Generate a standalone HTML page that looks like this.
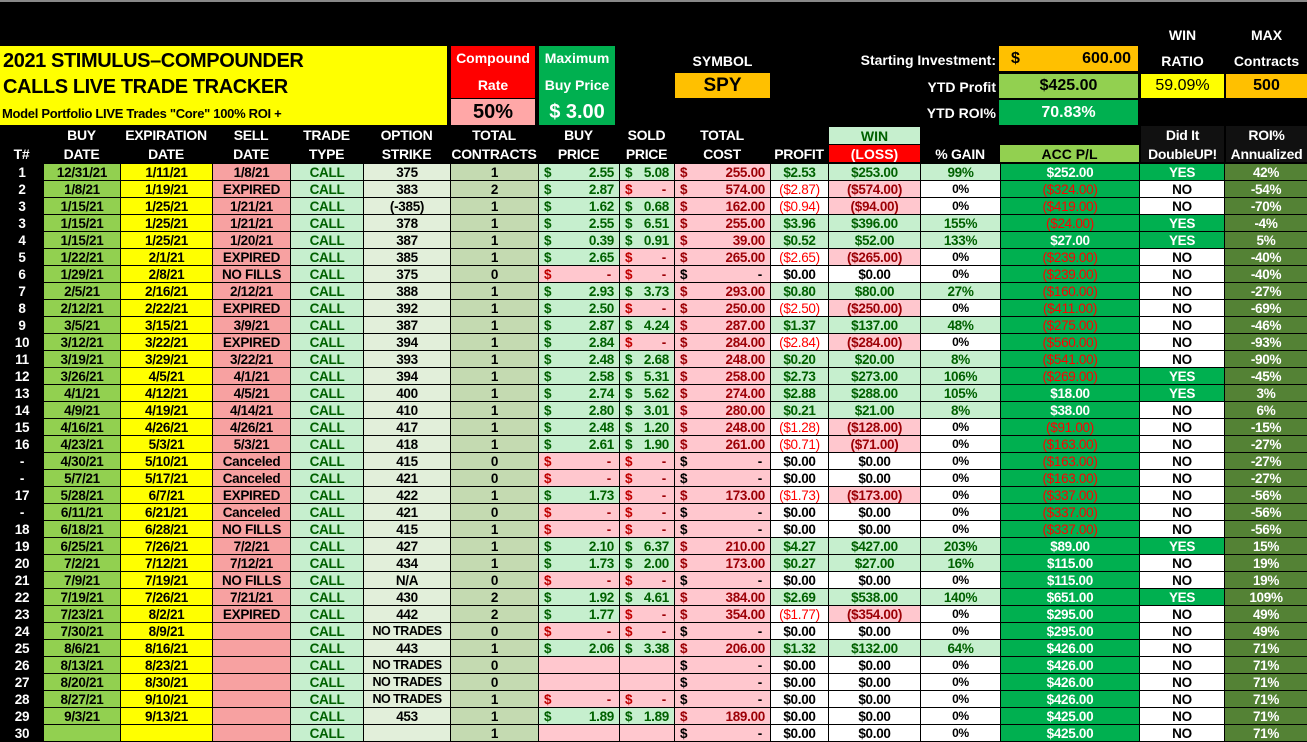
<!DOCTYPE html>
<html><head><meta charset="utf-8"><style>
*{margin:0;padding:0;box-sizing:border-box}
body{width:1307px;height:742px;background:#000;overflow:hidden;position:relative;font-family:"Liberation Sans Narrow","Liberation Sans",sans-serif;font-weight:bold;color:#000}
.ab{position:absolute;display:flex;align-items:center;justify-content:center;text-align:center}
.w{color:#fff}
table{position:absolute;left:0;top:163px;width:1307px;border-collapse:collapse;table-layout:fixed;font-size:13.5px;letter-spacing:-0.3px}
td{height:17px;line-height:15px;border:1px solid #000;text-align:center;white-space:nowrap;overflow:hidden;padding:0}
td i{float:left;font-style:normal;padding-left:5px}
.n{background:#000;color:#fff;border-color:#000}
.a{background:#92d050}.e{background:#ffff00}.s{background:#f7a1a1}
.t{background:#c6efce;color:#006100}
.k{background:#e2efda}.c{background:#c4dab1}
.pg{background:#c6efce;color:#006100;text-align:right;padding-right:5px}
.pr{background:#ffc7ce;color:#9c0006;text-align:right;padding-right:8px}
.pr i{color:#c00000}
.pe{background:#ffc7ce}
.cr{background:#ffc7ce;color:#9c0006;text-align:right;padding-right:5px}
.ck{background:#ffc7ce;color:#000;text-align:right;padding-right:8px}
.pp{background:#c6efce;color:#006100}.pn{background:#fff;color:#f00;font-weight:normal}.pz{background:#fff}
.wp{background:#c6efce;color:#006100}.wn{background:#ffc7ce;color:#9c0006}.wz{background:#fff}
.gp{background:#c6efce;color:#006100}.gz{background:#fff;font-size:12px}
.ap{background:#00b050;color:#fff}.an{background:#00b050;color:#f00;font-weight:normal}
.y{background:#00b050;color:#fff}.no{background:#fff}
.r{background:#548235;color:#fff}
.nt{font-size:12.5px;letter-spacing:-0.5px}
.h{position:absolute;color:#fff;font-size:14px;text-align:center;line-height:19px;top:126px;letter-spacing:-0.3px}
</style></head><body>
<div style="position:absolute;left:0;top:0;width:1307px;height:2px;background:#888"></div>
<div style="position:absolute;left:0;top:46px;width:447px;height:79px;background:#ffff00">
<div style="position:absolute;left:3px;top:2px;font-family:'Liberation Sans',sans-serif;font-size:20px;line-height:26px;letter-spacing:-0.4px">2021 STIMULUS–COMPOUNDER</div>
<div style="position:absolute;left:3px;top:28px;font-family:'Liberation Sans',sans-serif;font-size:20px;line-height:26px;letter-spacing:-0.4px">CALLS LIVE TRADE TRACKER</div>
<div style="position:absolute;left:2px;top:59px;font-size:13px;line-height:18px;letter-spacing:-0.3px">Model Portfolio LIVE Trades "Core" 100% ROI +</div>
</div>
<div class="ab w" style="left:451px;top:46px;width:84px;height:52px;background:#f00;flex-direction:column;font-size:14px;line-height:27px"><div>Compound</div><div>Rate</div></div>
<div class="ab" style="left:451px;top:99px;width:84px;height:26px;background:#ffa7a7;font-size:20px">50%</div>
<div class="ab w" style="left:539px;top:46px;width:76px;height:79px;background:#00b050;flex-direction:column;font-size:14px;line-height:27px"><div>Maximum</div><div>Buy Price</div><div style="font-size:20px">$ 3.00</div></div>
<div class="ab w" style="left:675px;top:50px;width:95px;height:22px;font-size:14px">SYMBOL</div>
<div class="ab" style="left:675px;top:73px;width:95px;height:25px;background:#ffc000;font-size:19px">SPY</div>
<div class="ab w" style="left:780px;top:48px;width:216px;height:24px;justify-content:flex-end;font-size:14px">Starting Investment:</div>
<div class="ab w" style="left:780px;top:75px;width:216px;height:24px;justify-content:flex-end;font-size:14px">YTD Profit</div>
<div class="ab w" style="left:780px;top:101px;width:216px;height:24px;justify-content:flex-end;font-size:14px">YTD ROI%</div>
<div class="ab" style="left:999px;top:46px;width:139px;height:25px;background:#ffc000;font-size:16px;justify-content:space-between;padding:0 7px 0 12px"><span>$</span><span>600.00</span></div>
<div class="ab" style="left:999px;top:74px;width:139px;height:24px;background:#92d050;font-size:16px">$425.00</div>
<div class="ab w" style="left:999px;top:100px;width:139px;height:25px;background:#00b050;font-size:16px">70.83%</div>
<div class="ab w" style="left:1141px;top:24px;width:83px;height:22px;font-size:14px">WIN</div>
<div class="ab w" style="left:1141px;top:50px;width:83px;height:22px;font-size:14px">RATIO</div>
<div class="ab w" style="left:1226px;top:24px;width:81px;height:22px;font-size:14px">MAX</div>
<div class="ab w" style="left:1226px;top:50px;width:81px;height:22px;font-size:14px">Contracts</div>
<div class="ab" style="left:1141px;top:74px;width:83px;height:24px;background:#ffff00;font-size:16px;font-weight:normal">59.09%</div>
<div class="ab" style="left:1226px;top:74px;width:81px;height:24px;background:#ffc000;font-size:16px">500</div>

<div class="h" style="left:0;width:43px"><br>T#</div>
<div class="h" style="left:43px;width:77px">BUY<br>DATE</div>
<div class="h" style="left:120px;width:92px">EXPIRATION<br>DATE</div>
<div class="h" style="left:212px;width:78px">SELL<br>DATE</div>
<div class="h" style="left:290px;width:73px">TRADE<br>TYPE</div>
<div class="h" style="left:363px;width:87px">OPTION<br>STRIKE</div>
<div class="h" style="left:450px;width:88px">TOTAL<br>CONTRACTS</div>
<div class="h" style="left:538px;width:81px">BUY<br>PRICE</div>
<div class="h" style="left:619px;width:55px">SOLD<br>PRICE</div>
<div class="h" style="left:674px;width:96px">TOTAL<br>COST</div>
<div class="h" style="left:770px;width:58px"><br>PROFIT</div>
<div class="ab" style="left:829px;top:127px;width:91px;height:17px;background:#c6efce;color:#006100;font-size:14px">WIN</div>
<div class="ab" style="left:829px;top:145px;width:91px;height:17px;background:#f00;color:#fff;font-size:14px">(LOSS)</div>
<div class="h" style="left:920px;width:80px"><br>% GAIN</div>
<div class="ab" style="left:1000px;top:145px;width:139px;height:17px;background:#92d050;font-size:14px">ACC P/L</div>
<div class="h" style="left:1141px;width:83px;background:#111;height:36px">Did It<br>DoubleUP!</div>
<div class="h" style="left:1226px;width:81px;background:#111;height:36px">ROI%<br>Annualized</div>

<table>
<colgroup><col style="width:43px"><col style="width:77px"><col style="width:92px"><col style="width:78px"><col style="width:73px"><col style="width:87px"><col style="width:88px"><col style="width:81px"><col style="width:55px"><col style="width:96px"><col style="width:58px"><col style="width:92px"><col style="width:80px"><col style="width:139px"><col style="width:85px"><col style="width:83px"></colgroup>
<tr><td class="n">1</td><td class="a">12/31/21</td><td class="e">1/11/21</td><td class="s">1/8/21</td><td class="t">CALL</td><td class="k">375</td><td class="c">1</td><td class="pg"><i>$</i>2.55</td><td class="pg"><i>$</i>5.08</td><td class="cr"><i>$</i>255.00</td><td class="pp">$2.53</td><td class="wp">$253.00</td><td class="gp">99%</td><td class="ap">$252.00</td><td class="y">YES</td><td class="r">42%</td></tr>
<tr><td class="n">2</td><td class="a">1/8/21</td><td class="e">1/19/21</td><td class="s">EXPIRED</td><td class="t">CALL</td><td class="k">383</td><td class="c">2</td><td class="pg"><i>$</i>2.87</td><td class="pr"><i>$</i>-</td><td class="cr"><i>$</i>574.00</td><td class="pn">($2.87)</td><td class="wn">($574.00)</td><td class="gz">0%</td><td class="an">($324.00)</td><td class="no">NO</td><td class="r">-54%</td></tr>
<tr><td class="n">3</td><td class="a">1/15/21</td><td class="e">1/25/21</td><td class="s">1/21/21</td><td class="t">CALL</td><td class="k">(-385)</td><td class="c">1</td><td class="pg"><i>$</i>1.62</td><td class="pg"><i>$</i>0.68</td><td class="cr"><i>$</i>162.00</td><td class="pn">($0.94)</td><td class="wn">($94.00)</td><td class="gz">0%</td><td class="an">($419.00)</td><td class="no">NO</td><td class="r">-70%</td></tr>
<tr><td class="n">3</td><td class="a">1/15/21</td><td class="e">1/25/21</td><td class="s">1/21/21</td><td class="t">CALL</td><td class="k">378</td><td class="c">1</td><td class="pg"><i>$</i>2.55</td><td class="pg"><i>$</i>6.51</td><td class="cr"><i>$</i>255.00</td><td class="pp">$3.96</td><td class="wp">$396.00</td><td class="gp">155%</td><td class="an">($24.00)</td><td class="y">YES</td><td class="r">-4%</td></tr>
<tr><td class="n">4</td><td class="a">1/15/21</td><td class="e">1/25/21</td><td class="s">1/20/21</td><td class="t">CALL</td><td class="k">387</td><td class="c">1</td><td class="pg"><i>$</i>0.39</td><td class="pg"><i>$</i>0.91</td><td class="cr"><i>$</i>39.00</td><td class="pp">$0.52</td><td class="wp">$52.00</td><td class="gp">133%</td><td class="ap">$27.00</td><td class="y">YES</td><td class="r">5%</td></tr>
<tr><td class="n">5</td><td class="a">1/22/21</td><td class="e">2/1/21</td><td class="s">EXPIRED</td><td class="t">CALL</td><td class="k">385</td><td class="c">1</td><td class="pg"><i>$</i>2.65</td><td class="pr"><i>$</i>-</td><td class="cr"><i>$</i>265.00</td><td class="pn">($2.65)</td><td class="wn">($265.00)</td><td class="gz">0%</td><td class="an">($239.00)</td><td class="no">NO</td><td class="r">-40%</td></tr>
<tr><td class="n">6</td><td class="a">1/29/21</td><td class="e">2/8/21</td><td class="s">NO FILLS</td><td class="t">CALL</td><td class="k">375</td><td class="c">0</td><td class="pr"><i>$</i>-</td><td class="pr"><i>$</i>-</td><td class="ck"><i>$</i>-</td><td class="pz">$0.00</td><td class="wz">$0.00</td><td class="gz">0%</td><td class="an">($239.00)</td><td class="no">NO</td><td class="r">-40%</td></tr>
<tr><td class="n">7</td><td class="a">2/5/21</td><td class="e">2/16/21</td><td class="s">2/12/21</td><td class="t">CALL</td><td class="k">388</td><td class="c">1</td><td class="pg"><i>$</i>2.93</td><td class="pg"><i>$</i>3.73</td><td class="cr"><i>$</i>293.00</td><td class="pp">$0.80</td><td class="wp">$80.00</td><td class="gp">27%</td><td class="an">($160.00)</td><td class="no">NO</td><td class="r">-27%</td></tr>
<tr><td class="n">8</td><td class="a">2/12/21</td><td class="e">2/22/21</td><td class="s">EXPIRED</td><td class="t">CALL</td><td class="k">392</td><td class="c">1</td><td class="pg"><i>$</i>2.50</td><td class="pr"><i>$</i>-</td><td class="cr"><i>$</i>250.00</td><td class="pn">($2.50)</td><td class="wn">($250.00)</td><td class="gz">0%</td><td class="an">($411.00)</td><td class="no">NO</td><td class="r">-69%</td></tr>
<tr><td class="n">9</td><td class="a">3/5/21</td><td class="e">3/15/21</td><td class="s">3/9/21</td><td class="t">CALL</td><td class="k">387</td><td class="c">1</td><td class="pg"><i>$</i>2.87</td><td class="pg"><i>$</i>4.24</td><td class="cr"><i>$</i>287.00</td><td class="pp">$1.37</td><td class="wp">$137.00</td><td class="gp">48%</td><td class="an">($275.00)</td><td class="no">NO</td><td class="r">-46%</td></tr>
<tr><td class="n">10</td><td class="a">3/12/21</td><td class="e">3/22/21</td><td class="s">EXPIRED</td><td class="t">CALL</td><td class="k">394</td><td class="c">1</td><td class="pg"><i>$</i>2.84</td><td class="pr"><i>$</i>-</td><td class="cr"><i>$</i>284.00</td><td class="pn">($2.84)</td><td class="wn">($284.00)</td><td class="gz">0%</td><td class="an">($560.00)</td><td class="no">NO</td><td class="r">-93%</td></tr>
<tr><td class="n">11</td><td class="a">3/19/21</td><td class="e">3/29/21</td><td class="s">3/22/21</td><td class="t">CALL</td><td class="k">393</td><td class="c">1</td><td class="pg"><i>$</i>2.48</td><td class="pg"><i>$</i>2.68</td><td class="cr"><i>$</i>248.00</td><td class="pp">$0.20</td><td class="wp">$20.00</td><td class="gp">8%</td><td class="an">($541.00)</td><td class="no">NO</td><td class="r">-90%</td></tr>
<tr><td class="n">12</td><td class="a">3/26/21</td><td class="e">4/5/21</td><td class="s">4/1/21</td><td class="t">CALL</td><td class="k">394</td><td class="c">1</td><td class="pg"><i>$</i>2.58</td><td class="pg"><i>$</i>5.31</td><td class="cr"><i>$</i>258.00</td><td class="pp">$2.73</td><td class="wp">$273.00</td><td class="gp">106%</td><td class="an">($269.00)</td><td class="y">YES</td><td class="r">-45%</td></tr>
<tr><td class="n">13</td><td class="a">4/1/21</td><td class="e">4/12/21</td><td class="s">4/5/21</td><td class="t">CALL</td><td class="k">400</td><td class="c">1</td><td class="pg"><i>$</i>2.74</td><td class="pg"><i>$</i>5.62</td><td class="cr"><i>$</i>274.00</td><td class="pp">$2.88</td><td class="wp">$288.00</td><td class="gp">105%</td><td class="ap">$18.00</td><td class="y">YES</td><td class="r">3%</td></tr>
<tr><td class="n">14</td><td class="a">4/9/21</td><td class="e">4/19/21</td><td class="s">4/14/21</td><td class="t">CALL</td><td class="k">410</td><td class="c">1</td><td class="pg"><i>$</i>2.80</td><td class="pg"><i>$</i>3.01</td><td class="cr"><i>$</i>280.00</td><td class="pp">$0.21</td><td class="wp">$21.00</td><td class="gp">8%</td><td class="ap">$38.00</td><td class="no">NO</td><td class="r">6%</td></tr>
<tr><td class="n">15</td><td class="a">4/16/21</td><td class="e">4/26/21</td><td class="s">4/26/21</td><td class="t">CALL</td><td class="k">417</td><td class="c">1</td><td class="pg"><i>$</i>2.48</td><td class="pg"><i>$</i>1.20</td><td class="cr"><i>$</i>248.00</td><td class="pn">($1.28)</td><td class="wn">($128.00)</td><td class="gz">0%</td><td class="an">($91.00)</td><td class="no">NO</td><td class="r">-15%</td></tr>
<tr><td class="n">16</td><td class="a">4/23/21</td><td class="e">5/3/21</td><td class="s">5/3/21</td><td class="t">CALL</td><td class="k">418</td><td class="c">1</td><td class="pg"><i>$</i>2.61</td><td class="pg"><i>$</i>1.90</td><td class="cr"><i>$</i>261.00</td><td class="pn">($0.71)</td><td class="wn">($71.00)</td><td class="gz">0%</td><td class="an">($163.00)</td><td class="no">NO</td><td class="r">-27%</td></tr>
<tr><td class="n">-</td><td class="a">4/30/21</td><td class="e">5/10/21</td><td class="s">Canceled</td><td class="t">CALL</td><td class="k">415</td><td class="c">0</td><td class="pr"><i>$</i>-</td><td class="pr"><i>$</i>-</td><td class="ck"><i>$</i>-</td><td class="pz">$0.00</td><td class="wz">$0.00</td><td class="gz">0%</td><td class="an">($163.00)</td><td class="no">NO</td><td class="r">-27%</td></tr>
<tr><td class="n">-</td><td class="a">5/7/21</td><td class="e">5/17/21</td><td class="s">Canceled</td><td class="t">CALL</td><td class="k">421</td><td class="c">0</td><td class="pr"><i>$</i>-</td><td class="pr"><i>$</i>-</td><td class="ck"><i>$</i>-</td><td class="pz">$0.00</td><td class="wz">$0.00</td><td class="gz">0%</td><td class="an">($163.00)</td><td class="no">NO</td><td class="r">-27%</td></tr>
<tr><td class="n">17</td><td class="a">5/28/21</td><td class="e">6/7/21</td><td class="s">EXPIRED</td><td class="t">CALL</td><td class="k">422</td><td class="c">1</td><td class="pg"><i>$</i>1.73</td><td class="pr"><i>$</i>-</td><td class="cr"><i>$</i>173.00</td><td class="pn">($1.73)</td><td class="wn">($173.00)</td><td class="gz">0%</td><td class="an">($337.00)</td><td class="no">NO</td><td class="r">-56%</td></tr>
<tr><td class="n">-</td><td class="a">6/11/21</td><td class="e">6/21/21</td><td class="s">Canceled</td><td class="t">CALL</td><td class="k">421</td><td class="c">0</td><td class="pr"><i>$</i>-</td><td class="pr"><i>$</i>-</td><td class="ck"><i>$</i>-</td><td class="pz">$0.00</td><td class="wz">$0.00</td><td class="gz">0%</td><td class="an">($337.00)</td><td class="no">NO</td><td class="r">-56%</td></tr>
<tr><td class="n">18</td><td class="a">6/18/21</td><td class="e">6/28/21</td><td class="s">NO FILLS</td><td class="t">CALL</td><td class="k">415</td><td class="c">1</td><td class="pr"><i>$</i>-</td><td class="pr"><i>$</i>-</td><td class="ck"><i>$</i>-</td><td class="pz">$0.00</td><td class="wz">$0.00</td><td class="gz">0%</td><td class="an">($337.00)</td><td class="no">NO</td><td class="r">-56%</td></tr>
<tr><td class="n">19</td><td class="a">6/25/21</td><td class="e">7/26/21</td><td class="s">7/2/21</td><td class="t">CALL</td><td class="k">427</td><td class="c">1</td><td class="pg"><i>$</i>2.10</td><td class="pg"><i>$</i>6.37</td><td class="cr"><i>$</i>210.00</td><td class="pp">$4.27</td><td class="wp">$427.00</td><td class="gp">203%</td><td class="ap">$89.00</td><td class="y">YES</td><td class="r">15%</td></tr>
<tr><td class="n">20</td><td class="a">7/2/21</td><td class="e">7/12/21</td><td class="s">7/12/21</td><td class="t">CALL</td><td class="k">434</td><td class="c">1</td><td class="pg"><i>$</i>1.73</td><td class="pg"><i>$</i>2.00</td><td class="cr"><i>$</i>173.00</td><td class="pp">$0.27</td><td class="wp">$27.00</td><td class="gp">16%</td><td class="ap">$115.00</td><td class="no">NO</td><td class="r">19%</td></tr>
<tr><td class="n">21</td><td class="a">7/9/21</td><td class="e">7/19/21</td><td class="s">NO FILLS</td><td class="t">CALL</td><td class="k">N/A</td><td class="c">0</td><td class="pr"><i>$</i>-</td><td class="pr"><i>$</i>-</td><td class="ck"><i>$</i>-</td><td class="pz">$0.00</td><td class="wz">$0.00</td><td class="gz">0%</td><td class="ap">$115.00</td><td class="no">NO</td><td class="r">19%</td></tr>
<tr><td class="n">22</td><td class="a">7/19/21</td><td class="e">7/26/21</td><td class="s">7/21/21</td><td class="t">CALL</td><td class="k">430</td><td class="c">2</td><td class="pg"><i>$</i>1.92</td><td class="pg"><i>$</i>4.61</td><td class="cr"><i>$</i>384.00</td><td class="pp">$2.69</td><td class="wp">$538.00</td><td class="gp">140%</td><td class="ap">$651.00</td><td class="y">YES</td><td class="r">109%</td></tr>
<tr><td class="n">23</td><td class="a">7/23/21</td><td class="e">8/2/21</td><td class="s">EXPIRED</td><td class="t">CALL</td><td class="k">442</td><td class="c">2</td><td class="pg"><i>$</i>1.77</td><td class="pr"><i>$</i>-</td><td class="cr"><i>$</i>354.00</td><td class="pn">($1.77)</td><td class="wn">($354.00)</td><td class="gz">0%</td><td class="ap">$295.00</td><td class="no">NO</td><td class="r">49%</td></tr>
<tr><td class="n">24</td><td class="a">7/30/21</td><td class="e">8/9/21</td><td class="s"></td><td class="t">CALL</td><td class="k nt">NO TRADES</td><td class="c">0</td><td class="pr"><i>$</i>-</td><td class="pr"><i>$</i>-</td><td class="ck"><i>$</i>-</td><td class="pz">$0.00</td><td class="wz">$0.00</td><td class="gz">0%</td><td class="ap">$295.00</td><td class="no">NO</td><td class="r">49%</td></tr>
<tr><td class="n">25</td><td class="a">8/6/21</td><td class="e">8/16/21</td><td class="s"></td><td class="t">CALL</td><td class="k">443</td><td class="c">1</td><td class="pg"><i>$</i>2.06</td><td class="pg"><i>$</i>3.38</td><td class="cr"><i>$</i>206.00</td><td class="pp">$1.32</td><td class="wp">$132.00</td><td class="gp">64%</td><td class="ap">$426.00</td><td class="no">NO</td><td class="r">71%</td></tr>
<tr><td class="n">26</td><td class="a">8/13/21</td><td class="e">8/23/21</td><td class="s"></td><td class="t">CALL</td><td class="k nt">NO TRADES</td><td class="c">0</td><td class="pe"></td><td class="pe"></td><td class="ck"><i>$</i>-</td><td class="pz">$0.00</td><td class="wz">$0.00</td><td class="gz">0%</td><td class="ap">$426.00</td><td class="no">NO</td><td class="r">71%</td></tr>
<tr><td class="n">27</td><td class="a">8/20/21</td><td class="e">8/30/21</td><td class="s"></td><td class="t">CALL</td><td class="k nt">NO TRADES</td><td class="c">0</td><td class="pe"></td><td class="pe"></td><td class="ck"><i>$</i>-</td><td class="pz">$0.00</td><td class="wz">$0.00</td><td class="gz">0%</td><td class="ap">$426.00</td><td class="no">NO</td><td class="r">71%</td></tr>
<tr><td class="n">28</td><td class="a">8/27/21</td><td class="e">9/10/21</td><td class="s"></td><td class="t">CALL</td><td class="k nt">NO TRADES</td><td class="c">1</td><td class="pr"><i>$</i>-</td><td class="pr"><i>$</i>-</td><td class="ck"><i>$</i>-</td><td class="pz">$0.00</td><td class="wz">$0.00</td><td class="gz">0%</td><td class="ap">$426.00</td><td class="no">NO</td><td class="r">71%</td></tr>
<tr><td class="n">29</td><td class="a">9/3/21</td><td class="e">9/13/21</td><td class="s"></td><td class="t">CALL</td><td class="k">453</td><td class="c">1</td><td class="pg"><i>$</i>1.89</td><td class="pg"><i>$</i>1.89</td><td class="cr"><i>$</i>189.00</td><td class="pz">$0.00</td><td class="wz">$0.00</td><td class="gz">0%</td><td class="ap">$425.00</td><td class="no">NO</td><td class="r">71%</td></tr>
<tr><td class="n">30</td><td class="a"></td><td class="e"></td><td class="s"></td><td class="t">CALL</td><td class="k"></td><td class="c">1</td><td class="pe"></td><td class="pe"></td><td class="ck"><i>$</i>-</td><td class="pz">$0.00</td><td class="wz">$0.00</td><td class="gz">0%</td><td class="ap">$425.00</td><td class="no">NO</td><td class="r">71%</td></tr>
</table>
</body></html>
